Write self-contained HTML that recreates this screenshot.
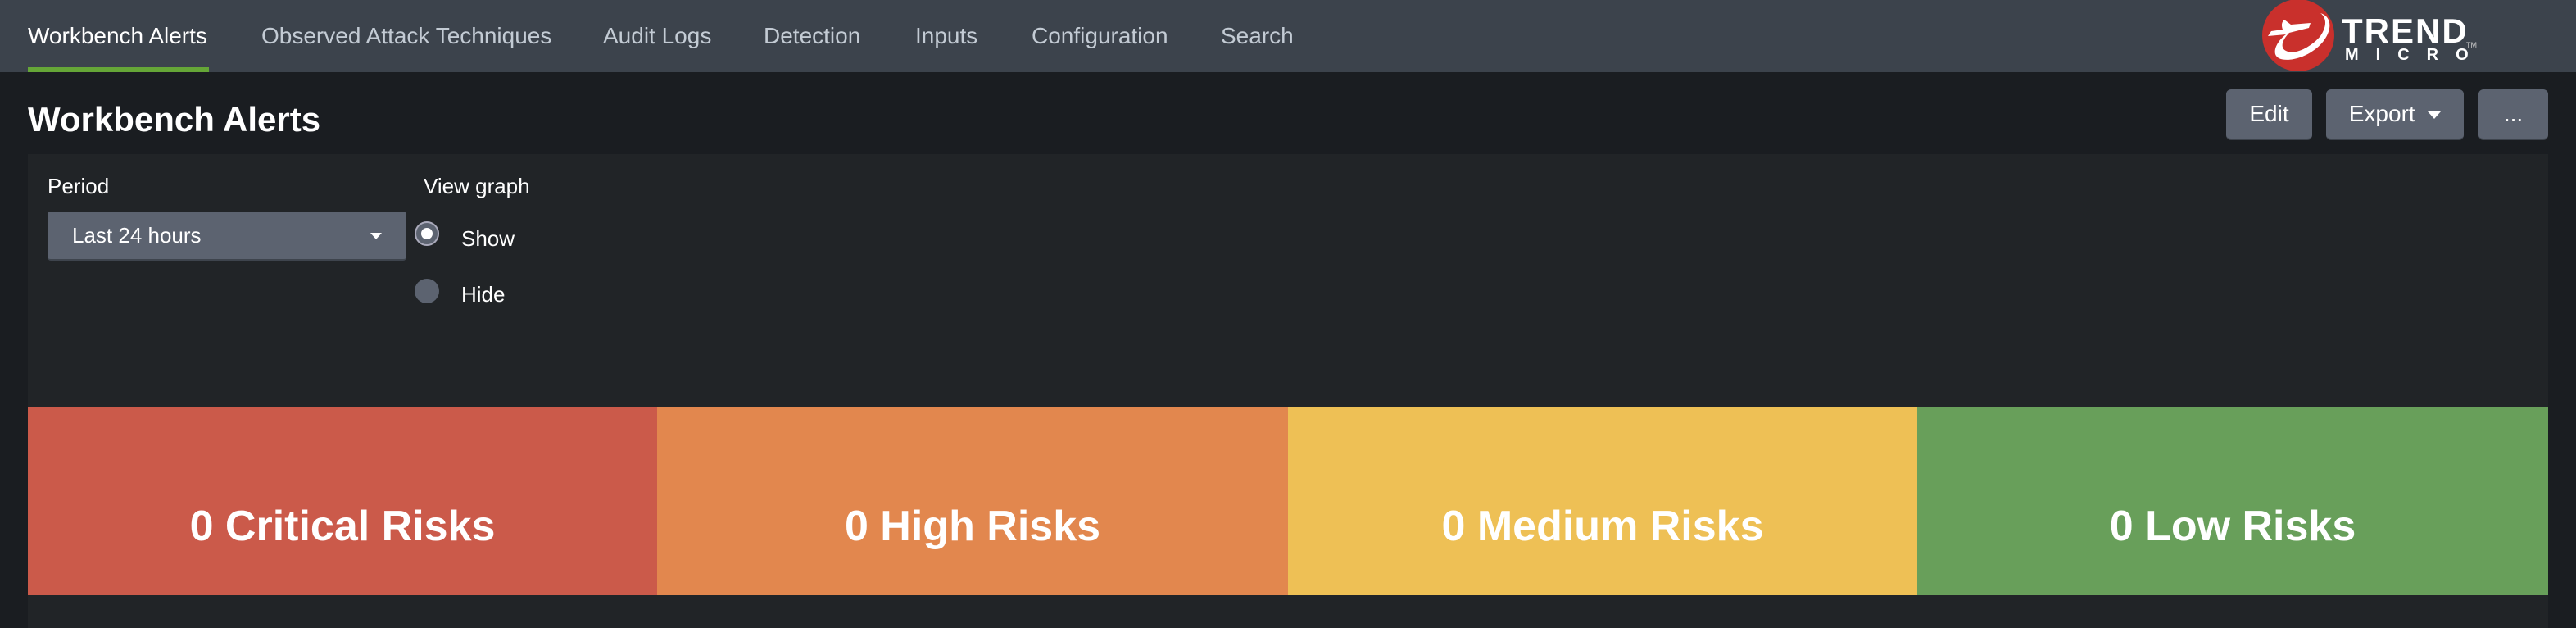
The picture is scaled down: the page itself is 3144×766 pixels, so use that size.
<!DOCTYPE html>
<html><head><style>
*{margin:0;padding:0;box-sizing:border-box}
body{width:3144px;height:766px;background:#1a1d21;font-family:"Liberation Sans",sans-serif;position:relative;overflow:hidden;color:#fff}
.hdr{position:absolute;left:0;top:0;width:3144px;height:88px;background:#3c434c}
.tab{position:absolute;top:28px;font-size:28px;color:#c3cbd4;white-space:nowrap}
.ul{position:absolute;left:34px;top:82px;width:221px;height:6px;background:#65a637}
.title{position:absolute;left:34px;top:122px;font-size:42px;font-weight:bold}
.btn{position:absolute;top:109px;height:62px;background:#5c6370;border-radius:6px;border-bottom:2px solid #3e444d;font-size:28px;color:#fff;text-align:center;line-height:60px}
.panel{position:absolute;left:34px;top:188px;width:3076px;height:578px;background:#212427}
.lbl{position:absolute;font-size:26px;color:#fff}
.dd{position:absolute;left:58px;top:258px;width:438px;height:60px;background:#5c6370;border-radius:4px;border-bottom:2px solid #3e444d;font-size:26px;line-height:58px;padding-left:30px}
.radio{position:absolute;width:30px;height:30px;border-radius:50%}
.tile{position:absolute;top:497px;height:229px;font-size:52px;font-weight:bold;text-align:center;line-height:60px;padding-top:115px;color:#fff}
.caret{display:inline-block;width:0;height:0;border-left:8px solid transparent;border-right:8px solid transparent;border-top:9px solid #fff;vertical-align:middle}
</style></head><body>
<div class="hdr"></div>
<div class="tab" style="left:34px;color:#fff">Workbench Alerts</div>
<div class="tab" style="left:319px">Observed Attack Techniques</div>
<div class="tab" style="left:736px">Audit Logs</div>
<div class="tab" style="left:932px">Detection</div>
<div class="tab" style="left:1117px">Inputs</div>
<div class="tab" style="left:1259px">Configuration</div>
<div class="tab" style="left:1490px">Search</div>
<div class="ul"></div>
<svg style="position:absolute;left:2760px;top:0" width="100" height="88" viewBox="0 0 100 88">
<circle cx="45" cy="43" r="44" fill="#c9302c"/>
<path d="M72 16 C92 22 84 50 60 64 C42 75 20 76 17 66 C15 58 22 48 30 42 L8 44 L12 38 L26 36 C24 30 25 27 28 24 L36 30 L60 28 L58 34 L34 40 C26 48 22 58 30 62 C42 68 62 56 72 44 C80 32 80 22 72 16Z" fill="#fff"/>
</svg>
<div style="position:absolute;left:2858px;top:14px;font-size:42px;font-weight:bold;color:#fff;letter-spacing:2px">TREND</div>
<div style="position:absolute;left:2862px;top:56px;font-size:20px;font-weight:bold;color:#fff;letter-spacing:21px">MICRO</div>
<div style="position:absolute;left:3010px;top:50px;font-size:9px;color:#ccc">TM</div>
<div class="title">Workbench Alerts</div>
<div class="btn" style="left:2717px;width:105px">Edit</div>
<div class="btn" style="left:2839px;width:168px">Export &nbsp;<span class="caret"></span></div>
<div class="btn" style="left:3025px;width:85px">...</div>
<div class="panel"></div>
<div class="lbl" style="left:58px;top:212px">Period</div>
<div class="dd">Last 24 hours<span class="caret" style="position:absolute;left:394px;top:26px;border-width:8px 7px 0 7px"></span></div>
<div class="lbl" style="left:517px;top:212px">View graph</div>
<div class="radio" style="left:506px;top:270px;background:#5c6370;border:2px solid #aab"><div style="position:absolute;left:6px;top:6px;width:14px;height:14px;border-radius:50%;background:#fff"></div></div>
<div class="lbl" style="left:563px;top:276px">Show</div>
<div class="radio" style="left:506px;top:340px;background:#5c6370"></div>
<div class="lbl" style="left:563px;top:344px">Hide</div>
<div class="tile" style="left:34px;width:768px;background:#cb5a4a">0 Critical Risks</div>
<div class="tile" style="left:802px;width:770px;background:#e2874e">0 High Risks</div>
<div class="tile" style="left:1572px;width:768px;background:#eec055">0 Medium Risks</div>
<div class="tile" style="left:2340px;width:770px;background:#689f5a">0 Low Risks</div>
</body></html>
